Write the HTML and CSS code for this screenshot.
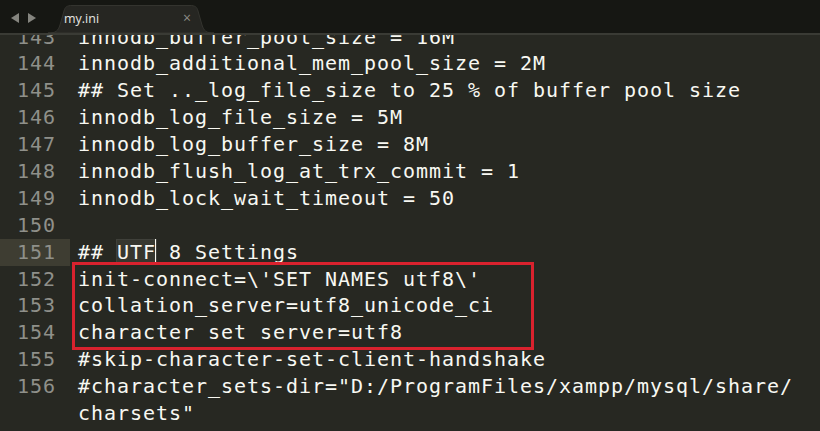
FILE: index.html
```html
<!DOCTYPE html>
<html lang="en">
<head>
  <meta charset="UTF-8">
  <title>my.ini</title>
  <link rel="stylesheet" href="styles.css">
</head>
<body>
  <div class="tabbar">
    <div class="nav">
      <svg width="30" height="12" viewBox="0 0 30 12">
        <path d="M9 1 L1 6 L9 11 Z" fill="#85857f"/>
        <path d="M18 1 L26 6 L18 11 Z" fill="#85857f"/>
      </svg>
    </div>
    <div class="tab">
      <svg class="tab-shape" width="166" height="28" viewBox="0 0 166 28">
        <path d="M0 28 C8 28 10 26 12 20 L16 6 C17 2 19 0.5 24 0.5 L142 0.5 C147 0.5 149 2 150 6 L154 20 C156 26 158 28 166 28 Z" fill="#262622" stroke="#34342f"/>
      </svg>
      <span class="tab-name">my.ini</span>
      <span class="tab-close">&times;</span>
    </div>
  </div>

  <div class="editor">
    <div class="lines">
      <div class="row"><span class="num">143</span><span class="code">innodb_buffer_pool_size = 16M</span></div>
      <div class="row"><span class="num">144</span><span class="code">innodb_additional_mem_pool_size = 2M</span></div>
      <div class="row"><span class="num">145</span><span class="code">## Set .._log_file_size to 25 % of buffer pool size</span></div>
      <div class="row"><span class="num">146</span><span class="code">innodb_log_file_size = 5M</span></div>
      <div class="row"><span class="num">147</span><span class="code">innodb_log_buffer_size = 8M</span></div>
      <div class="row"><span class="num">148</span><span class="code">innodb_flush_log_at_trx_commit = 1</span></div>
      <div class="row"><span class="num">149</span><span class="code">innodb_lock_wait_timeout = 50</span></div>
      <div class="row"><span class="num">150</span><span class="code"></span></div>
      <div class="row current"><span class="num">151</span><span class="code">## <span class="word">UTF</span><span class="caret"></span> 8 Settings</span></div>
      <div class="mark">
        <div class="row"><span class="num">152</span><span class="code">init-connect=\'SET NAMES utf8\'</span></div>
        <div class="row"><span class="num">153</span><span class="code">collation_server=utf8_unicode_ci</span></div>
        <div class="row"><span class="num">154</span><span class="code">character set server=utf8</span></div>
      </div>
      <div class="row"><span class="num">155</span><span class="code">#skip-character-set-client-handshake</span></div>
      <div class="row"><span class="num">156</span><span class="code">#character_sets-dir="D:/ProgramFiles/xampp/mysql/share/</span></div>
      <div class="row"><span class="num"></span><span class="code">charsets"</span></div>
    </div>
  </div>
</body>
</html>
```

FILE: styles.css
```css
* {
  margin: 0;
  padding: 0;
  box-sizing: border-box;
}

body {
  background: #272822;
  color: #f8f8f2;
  height: 100vh;
  overflow: hidden;
  display: flex;
  flex-direction: column;
}

/* Tab bar */
.tabbar {
  height: 33px;
  background: #161713;
  display: flex;
  align-items: flex-end;
  flex-shrink: 0;
  position: relative;
  z-index: 2;
}

.nav {
  width: 48px;
  height: 33px;
  display: flex;
  align-items: center;
  padding-left: 10px;
  padding-top: 2px;
}

.tab {
  position: relative;
  width: 166px;
  height: 28px;
  display: flex;
  align-items: center;
  font-family: "Open Sans", "Liberation Sans", sans-serif;
  font-size: 12.5px;
}

.tab-shape {
  position: absolute;
  left: 0;
  top: 0;
}

.tab-name {
  position: relative;
  padding-left: 16px;
  color: #e6e6e2;
  flex: 1;
  margin-top: -2px;
}

.tab-close {
  position: relative;
  color: #8c8c86;
  font-size: 14px;
  margin-right: 23px;
  margin-top: -4px;
}

/* Editor */
.editor {
  flex: 1;
  overflow: hidden;
  border-top: 2px solid #3a3b35;
}

.lines {
  margin-top: -11.5px;
  font-family: "DejaVu Sans Mono", monospace;
  font-size: 20px;
  letter-spacing: 0.96px;
  line-height: 26.9px;
}

.row {
  display: flex;
  height: 26.9px;
  white-space: pre;
}

.num {
  width: 70px;
  padding-right: 14px;
  text-align: right;
  color: #8f908a;
  flex-shrink: 0;
}

.current .num {
  background: #3e3d32;
}

.code {
  padding-left: 8px;
}

.word {
  background: #36372f;
  box-shadow: 0 0 0 1px #3f403a;
}

.caret {
  display: inline-block;
  width: 0;
  height: 26px;
  border-left: 1.5px solid #f8f8f0;
  vertical-align: top;
  margin-left: -1px;
}

.mark {
  position: relative;
}

.mark::after {
  content: "";
  position: absolute;
  left: 72px;
  top: -4px;
  width: 456px;
  height: 82px;
  border: 3px solid #d9222e;
}
```
